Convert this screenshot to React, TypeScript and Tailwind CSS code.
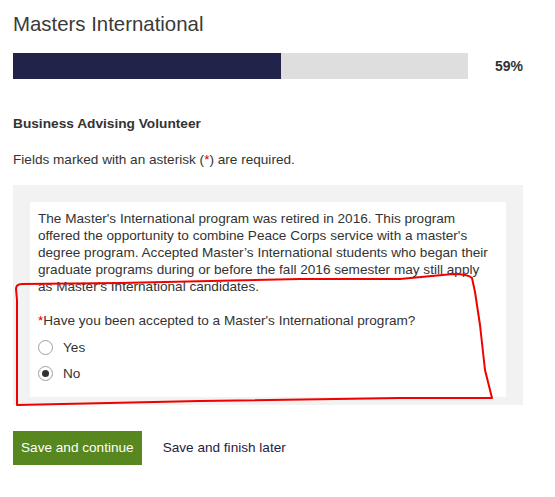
export default function App() {
    return (
        <div className="relative w-[555px] h-[497px] bg-white text-[#333333] font-['Liberation_Sans',Arial,sans-serif]">
            <div className="pl-[13px] pt-[12px]">
                <h1 className="text-[20.4px] leading-[24px] text-[#3a3a3a]">Masters International</h1>

                <div className="flex items-center mt-[17px]">
                    <div className="w-[455px] h-[26px] bg-[#dedede]">
                        <div className="h-full w-[59%] bg-[#21234b]"></div>
                    </div>
                    <span className="ml-[27px] text-[14px] font-bold leading-[17px]">59%</span>
                </div>

                <h2 className="mt-[36px] text-[13.7px] leading-[17px] font-bold">Business Advising Volunteer</h2>

                <p className="mt-[19px] text-[13.6px] leading-[17px]">
                    Fields marked with an asterisk (<span className="text-[#cc0000]">*</span>) are required.
                </p>

                <div className="mt-[17px] w-[510px] bg-[#f2f2f2] pt-[17px] pb-[8px] px-[17px]">
                    <div className="bg-white pl-[8px] pr-[8px] pt-[8px] pb-[11px] text-[13.6px] leading-[17px] whitespace-nowrap">
                        <p>
                            The Master's International program was retired in 2016. This program<br />
                            offered the opportunity to combine Peace Corps service with a master's<br />
                            degree program. Accepted Master’s International students who began their<br />
                            graduate programs during or before the fall 2016 semester may still apply<br />
                            as Master's International candidates.
                        </p>
                        <p className="mt-[17px]">
                            <span className="text-[#cc0000]">*</span>Have you been accepted to a Master's International program?
                        </p>
                        <div className="mt-[5px]">
                            <label className="flex items-center h-[26px]">
                                <span className="w-[15px] h-[15px] rounded-full border border-[#a0a0a0] bg-white"></span>
                                <span className="ml-[10px]">Yes</span>
                            </label>
                            <label className="flex items-center h-[26px]">
                                <span className="w-[15px] h-[15px] rounded-full border border-[#a0a0a0] bg-white flex items-center justify-center">
                                    <span className="w-[7px] h-[7px] rounded-full bg-[#333333]"></span>
                                </span>
                                <span className="ml-[10px]">No</span>
                            </label>
                        </div>
                    </div>
                </div>

                <div className="flex items-center mt-[26px]">
                    <button className="h-[34px] px-[8px] bg-[#58861f] text-white text-[13.6px]">Save and continue</button>
                    <span className="ml-[21px] text-[13.6px] text-[#1f2146]">Save and finish later</span>
                </div>
            </div>

            <svg className="absolute left-0 top-0 pointer-events-none" width="555" height="497" viewBox="0 0 555 497" fill="none">
                <path
                    d="M16 289 Q16 284 22 284 L120 283 L300 279 L400 279 L453 274 Q468 274 472 278 L475 292 L480 325 L485 370 L492 398 L400 398 L200 401 L17 405 L17 300 Z"
                    stroke="#f00000"
                    strokeWidth="2"
                    strokeLinejoin="round"
                />
            </svg>
        </div>
    );
}
